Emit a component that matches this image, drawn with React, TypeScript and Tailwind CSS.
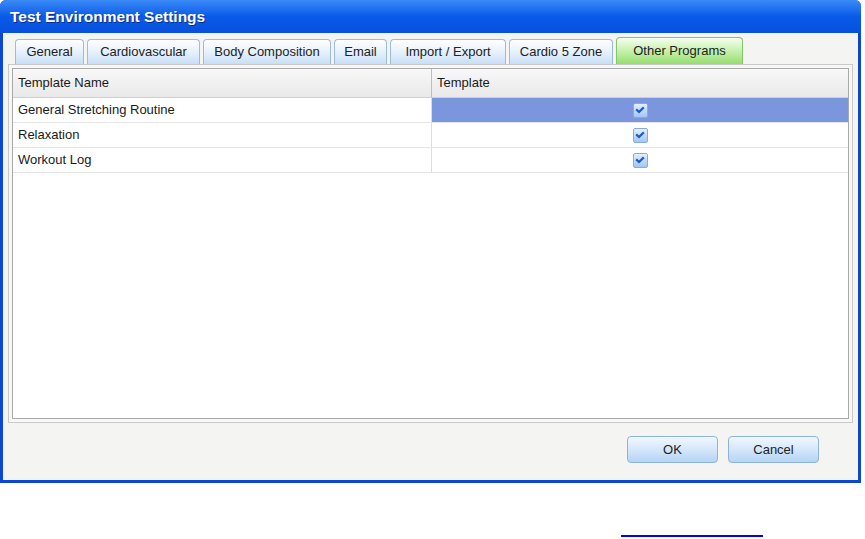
import React from "react";

const tabs = [
  { label: "General", w: "w-[69px]" },
  { label: "Cardiovascular", w: "w-[113px]" },
  { label: "Body Composition", w: "w-[128px]" },
  { label: "Email", w: "w-[53px]" },
  { label: "Import / Export", w: "w-[116px]" },
  { label: "Cardio 5 Zone", w: "w-[104px]" },
];

const rows = ["General Stretching Routine", "Relaxation", "Workout Log"];

function CheckBox() {
  return (
    <div className="w-[15px] h-[15px] rounded-[2px] border border-[#86acdc] bg-gradient-to-b from-[#e3effc] to-[#a3c6f2] flex items-center justify-center">
      <svg width="10" height="8" viewBox="0 0 10 8">
        <path d="M1.2 3.4 L4 6 L8.8 1.4" fill="none" stroke="#1d5ccc" strokeWidth="2.2" />
      </svg>
    </div>
  );
}

export default function App() {
  return (
    <div className="w-[865px] h-[539px] bg-white font-['Liberation_Sans',Arial,sans-serif] text-[13px] text-[#1a1a1a]">
      <div className="w-[861px] h-[483px] flex flex-col bg-[#0b47d0] px-[3px] pb-[3px] rounded-t-[6px]">
        {/* Title bar */}
        <div className="h-[33px] -mx-[3px] px-[10px] flex items-center rounded-t-[6px] bg-gradient-to-b from-[#3a8af7] via-[#0a5ae8] to-[#0750dd]">
          <span className="text-white font-bold text-[15.5px] [text-shadow:1px_1px_0_#0a2f8a]">
            Test Environment Settings
          </span>
        </div>

        {/* Body */}
        <div className="flex-1 bg-[#f4f4f3] flex flex-col px-[5px]">
          {/* Tabs */}
          <div className="h-[31px] flex items-end pl-[7px] gap-[3px]">
            {tabs.map((t) => (
              <div
                key={t.label}
                className={`${t.w} h-[25px] rounded-t-[4px] border border-b-0 border-[#9bbbe0] bg-gradient-to-b from-[#ffffff] via-[#e6f1fc] to-[#c7dff7] flex items-center justify-center text-[13px] text-[#222]`}
              >
                {t.label}
              </div>
            ))}
            <div className="w-[127px] h-[27px] rounded-t-[4px] border border-b-0 border-[#86c46a] bg-gradient-to-b from-[#f4fff0] via-[#c6f0ad] to-[#95de6c] flex items-center justify-center text-[13px] text-[#222]">
              Other Programs
            </div>
          </div>

          {/* Tab panel */}
          <div className="h-[359px] border border-[#c9c9c9] bg-[#f7f7f7] p-[3px]">
            <div className="h-full border border-[#a9a9a9] bg-white flex flex-col">
              {/* Header */}
              <div className="h-[29px] flex border-b border-[#cfcfcf] bg-gradient-to-b from-[#f8f8f8] to-[#e9e9e9]">
                <div className="w-[419px] border-r border-[#bdbdbd] flex items-center pl-[5px]">Template Name</div>
                <div className="flex-1 flex items-center pl-[5px]">Template</div>
              </div>
              {rows.map((r, i) => (
                <div key={r} className="h-[25px] flex border-b border-[#e4e4e4]">
                  <div className="w-[419px] border-r border-[#dcdcdc] flex items-center pl-[5px]">{r}</div>
                  <div className={`flex-1 flex items-center justify-center ${i === 0 ? "bg-[#7b96dc]" : "bg-white"}`}>
                    <CheckBox />
                  </div>
                </div>
              ))}
            </div>
          </div>

          {/* Buttons */}
          <div className="flex-1 flex justify-end items-start pt-[13px] pr-[34px] gap-[10px]">
            {["OK", "Cancel"].map((b) => (
              <div
                key={b}
                className="w-[91px] h-[27px] rounded-[4px] border border-[#8eb3dd] bg-gradient-to-b from-[#f2f8fe] via-[#d4e7fa] to-[#b5d4f5] flex items-center justify-center text-[13px] text-[#222]"
              >
                {b}
              </div>
            ))}
          </div>
        </div>
      </div>
      <div className="ml-[621px] mt-[52px] w-[142px] h-[2px] bg-[#0000ff]" />
    </div>
  );
}
